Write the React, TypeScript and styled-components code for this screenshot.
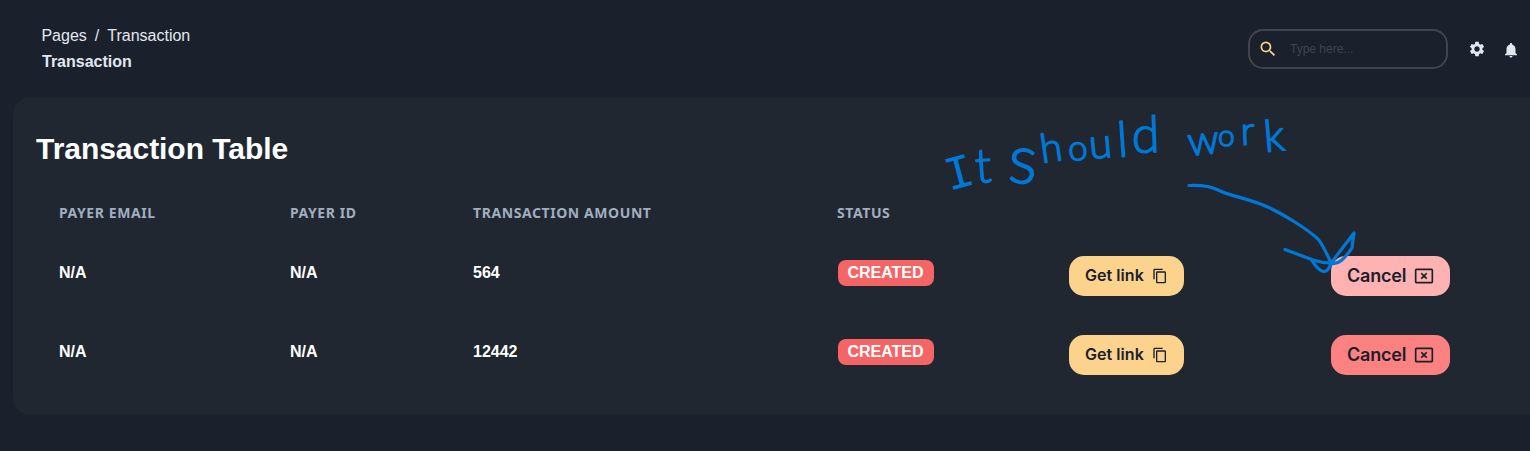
import React from "react";
import styled, { createGlobalStyle } from "styled-components";
import { MdSearch, MdSettings, MdNotifications, MdContentCopy, MdOutlineCancelPresentation } from "react-icons/md";

const GlobalStyle = createGlobalStyle`
  * { box-sizing: border-box; }
  body {
    margin: 0;
    background: #1a202c;
    color: #fff;
    font-family: "Liberation Sans", Arial, sans-serif;
    overflow: hidden;
  }
`;

const Page = styled.div`
  position: relative;
  height: 451px;
  padding-left: 13px;
  overflow: hidden;
`;

const TopBar = styled.header`
  display: flex;
  justify-content: space-between;
  height: 98px;
  padding: 24px 10px 0 29px;
`;

const Crumbs = styled.nav`
  display: flex;
  gap: 8px;
  margin-left: -0.6px;
  font-size: 16px;
  line-height: 24px;
  color: #e2e8f0;
`;

const PageName = styled.div`
  font-size: 16px;
  line-height: 24px;
  margin-top: 2px;
  font-weight: 700;
  color: #e2e8f0;
`;

const Tools = styled.div`
  display: flex;
  align-items: center;
  height: 40px;
  margin-top: 5px;
  color: #e2e8f0;
`;

const SearchBox = styled.label`
  display: flex;
  align-items: center;
  width: 200px;
  height: 40px;
  padding-left: 8px;
  gap: 12px;
  border: 2px solid #41444f;
  border-radius: 15px;
  color: #fbd38d;
  margin-right: 20px;
`;

const SearchInput = styled.input`
  width: 140px;
  padding: 0;
  border: 0;
  outline: 0;
  background: transparent;
  font: 12px "Liberation Sans", Arial, sans-serif;
  color: #fff;
  &::placeholder { color: #41444f; opacity: 1; }
`;

const BellSlot = styled.span`
  display: flex;
  margin: 2px 0 0 16px;
`;

const Card = styled.main`
  height: 316px;
  border-radius: 15px 0 0 15px;
  background: #202731;
  padding: 31px 0 0 23px;
`;

const Title = styled.h1`
  margin: 0;
  font-size: 30px;
  line-height: 39px;
  letter-spacing: -0.04px;
  font-weight: 700;
`;

const Row = styled.div`
  display: grid;
  grid-template-columns: 231px 183px 364px 232px 262px 1fr;
  align-items: start;
  height: 79px;
  padding: 19px 0 0 23px;
`;

const HeadRow = styled(Row)`
  height: 69px;
  padding-top: 35px;
`;

const HeadCell = styled.div`
  font: 700 14px/20px "Noto Sans", sans-serif;
  letter-spacing: 0.58px;
  color: #a0aec0;
`;

const Value = styled.div`
  padding-top: 5px;
  font-size: 16px;
  line-height: 24px;
  font-weight: 700;
`;

const Badge = styled.span`
  justify-self: start;
  width: 96px;
  height: 26px;
  margin: 4px 0 0 1px;
  padding-right: 1px;
  border-radius: 8px;
  background: #f56565;
  font-size: 16px;
  line-height: 26px;
  font-weight: 700;
  text-align: center;
`;

const Button = styled.button<{ $bg: string; $size: number; $width: number }>`
  display: flex;
  align-items: center;
  justify-content: space-between;
  width: ${(p) => p.$width}px;
  height: 40px;
  padding: 0 16px;
  border: 0;
  border-radius: 15px;
  background: ${(p) => p.$bg};
  color: #1a202c;
  font: 600 ${(p) => p.$size}px Inter, sans-serif;
`;

const Label = styled.span<{ $spacing: number }>`
  letter-spacing: ${(p) => p.$spacing}px;
  padding-bottom: 2px;
  white-space: nowrap;
`;

const Annotation = styled.svg`
  position: absolute;
  left: 0;
  top: 0;
  pointer-events: none;
`;

const Ink = styled.text`
  font-family: Lato, sans-serif;
  font-weight: 300;
  fill: #0078d7;
  stroke: #0078d7;
  stroke-width: 1.4px;
  stroke-linejoin: round;
`;

type Letter = { c: string; x: number; y: number; size: number; turn: number; font?: string; edge?: number };

const words: Letter[][] = [
  [
    { c: "I", x: 949, y: 191, size: 48, turn: -15, font: "Liberation Mono", edge: 0 },
    { c: "t", x: 976, y: 183, size: 48, turn: -4 },
  ],
  [
    { c: "s", x: 1007, y: 182, size: 68, turn: 4 },
    { c: "h", x: 1042, y: 163, size: 40, turn: -8 },
    { c: "o", x: 1069, y: 161, size: 35, turn: -5 },
    { c: "u", x: 1090, y: 159, size: 42, turn: -5 },
    { c: "l", x: 1118, y: 157, size: 49, turn: -4 },
    { c: "d", x: 1132, y: 153, size: 51, turn: -2 },
  ],
  [
    { c: "w", x: 1189, y: 156, size: 41, turn: -6 },
    { c: "o", x: 1218, y: 146, size: 30, turn: 0 },
    { c: "r", x: 1241, y: 145, size: 40, turn: -2 },
    { c: "k", x: 1265, y: 152, size: 44, turn: -5 },
  ],
];

const rows = [
  { amount: "564", cancel: "#feb2b2" },
  { amount: "12442", cancel: "#fc8181" },
];

export default function App() {
  return (
    <Page>
      <GlobalStyle />
      <TopBar>
        <div>
          <Crumbs><span>Pages</span><span>/</span><span>Transaction</span></Crumbs>
          <PageName>Transaction</PageName>
        </div>
        <Tools>
          <SearchBox>
            <MdSearch size={20} />
            <SearchInput placeholder="Type here..." />
          </SearchBox>
          <MdSettings size={18} />
          <BellSlot><MdNotifications size={18} /></BellSlot>
        </Tools>
      </TopBar>
      <Card>
        <Title>Transaction Table</Title>
        <HeadRow>
          <HeadCell>PAYER EMAIL</HeadCell>
          <HeadCell>PAYER ID</HeadCell>
          <HeadCell>TRANSACTION AMOUNT</HeadCell>
          <HeadCell>STATUS</HeadCell>
        </HeadRow>
        {rows.map((r) => (
          <Row key={r.amount}>
            <Value>N/A</Value>
            <Value>N/A</Value>
            <Value>{r.amount}</Value>
            <Badge>CREATED</Badge>
            <Button $bg="#fbd38d" $size={16} $width={115}><Label $spacing={0.05}>Get link</Label><MdContentCopy size={16} /></Button>
            <Button $bg={r.cancel} $size={18} $width={119}><Label $spacing={-0.2}>Cancel</Label><MdOutlineCancelPresentation size={20} /></Button>
          </Row>
        ))}
      </Card>
      <Annotation width="1530" height="451" fill="none">
        {words.map((word, i) => (
          <Ink key={i}>
            {word.map((l, j) => (
              <tspan key={j} x={l.x} y={l.y} rotate={l.turn} fontSize={l.size} fontFamily={l.font} strokeWidth={l.edge}>{l.c}</tspan>
            ))}
          </Ink>
        ))}
        <g stroke="#0078d7" strokeWidth="3.2" strokeLinecap="round" strokeLinejoin="round">
          <path d="M1189 185.500C1199 185 1210 186 1218 190C1230 196 1249 199 1263 205C1280 212 1306 228 1318 239C1323 245 1327 254 1331 263L1354 233L1352 248C1345 258 1338 266 1330 263" />
          <path d="M1285 249.500L1313 260Q1322 263 1331 263C1327 276 1321 272 1315 265L1311 259" />
        </g>
      </Annotation>
    </Page>
  );
}
